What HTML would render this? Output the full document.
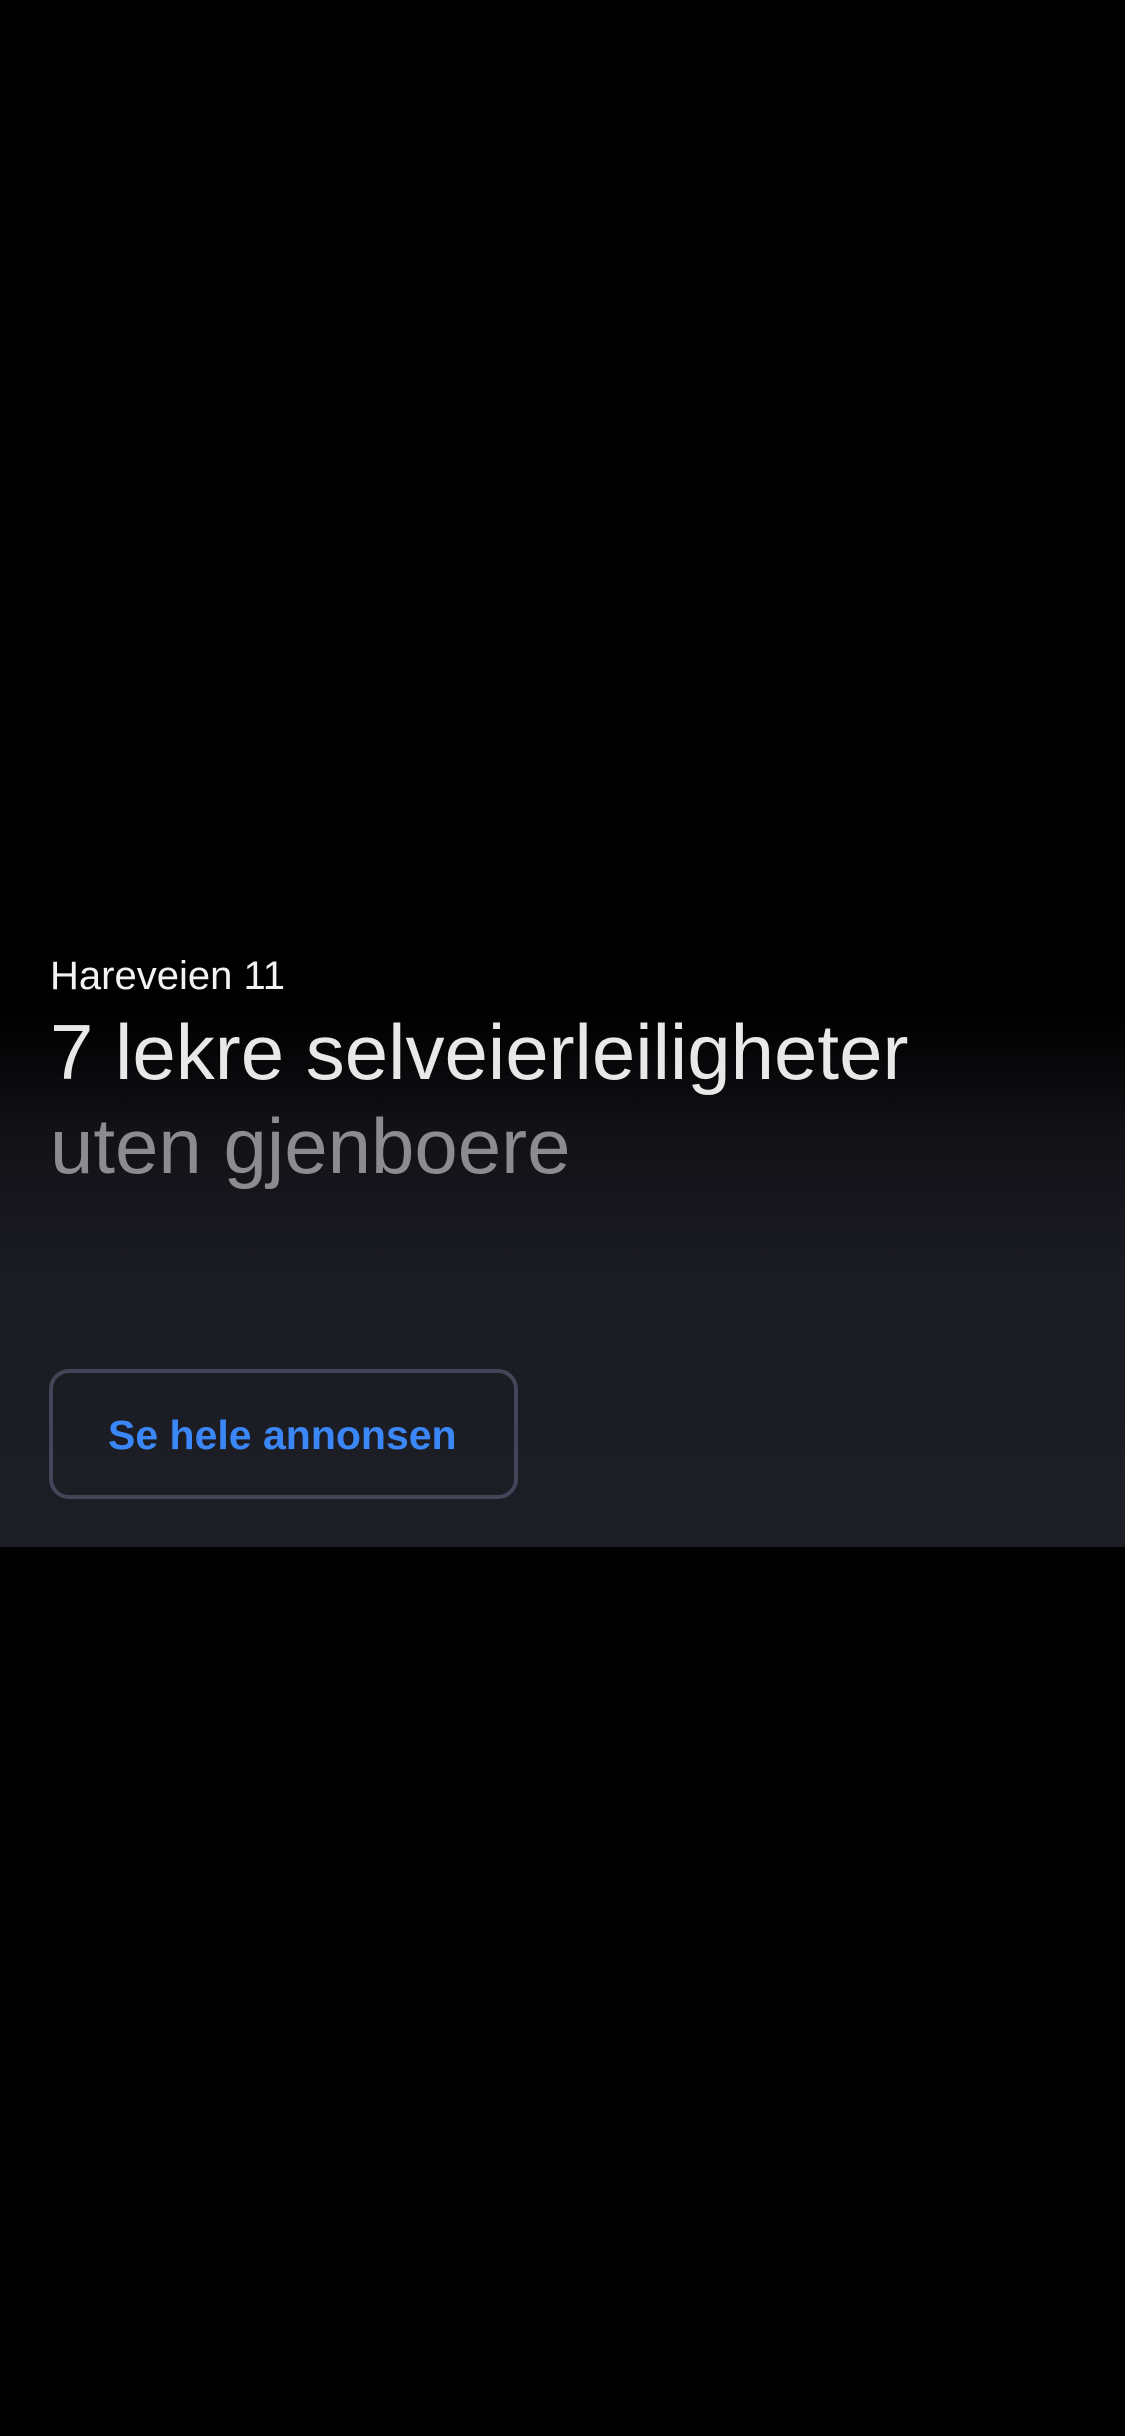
<!DOCTYPE html>
<html><head><meta charset="utf-8"><style>
html,body{margin:0;padding:0;background:#000;}
body{width:1125px;height:2436px;position:relative;overflow:hidden;font-family:"Liberation Sans",sans-serif;}
.panel{position:absolute;left:0;top:0;width:1125px;height:1547px;background:linear-gradient(to bottom,#000 0px,#000 1010px,#111116 1130px,#1c1c24 1293px,#1d1d25 1547px);}
.t{position:absolute;left:50px;white-space:nowrap;line-height:1;}
.addr{top:956px;font-size:40px;color:#f2f2f2;}
.h1{top:1013px;font-size:78px;color:#e8e8e8;}
.h2{top:1107px;font-size:78px;color:#8b8b90;}
.btn{position:absolute;left:49px;top:1369px;width:469px;height:130px;box-sizing:border-box;border:4px solid #454559;border-radius:20px;}
.btn span{position:absolute;left:55px;top:42px;font-size:41px;font-weight:bold;color:#3b87f7;line-height:1;white-space:nowrap;}
</style></head><body>
<div class="panel"></div>
<div class="t addr">Hareveien 11</div>
<div class="t h1">7 lekre selveierleiligheter</div>
<div class="t h2">uten gjenboere</div>
<div class="btn"><span>Se hele annonsen</span></div>
</body></html>
